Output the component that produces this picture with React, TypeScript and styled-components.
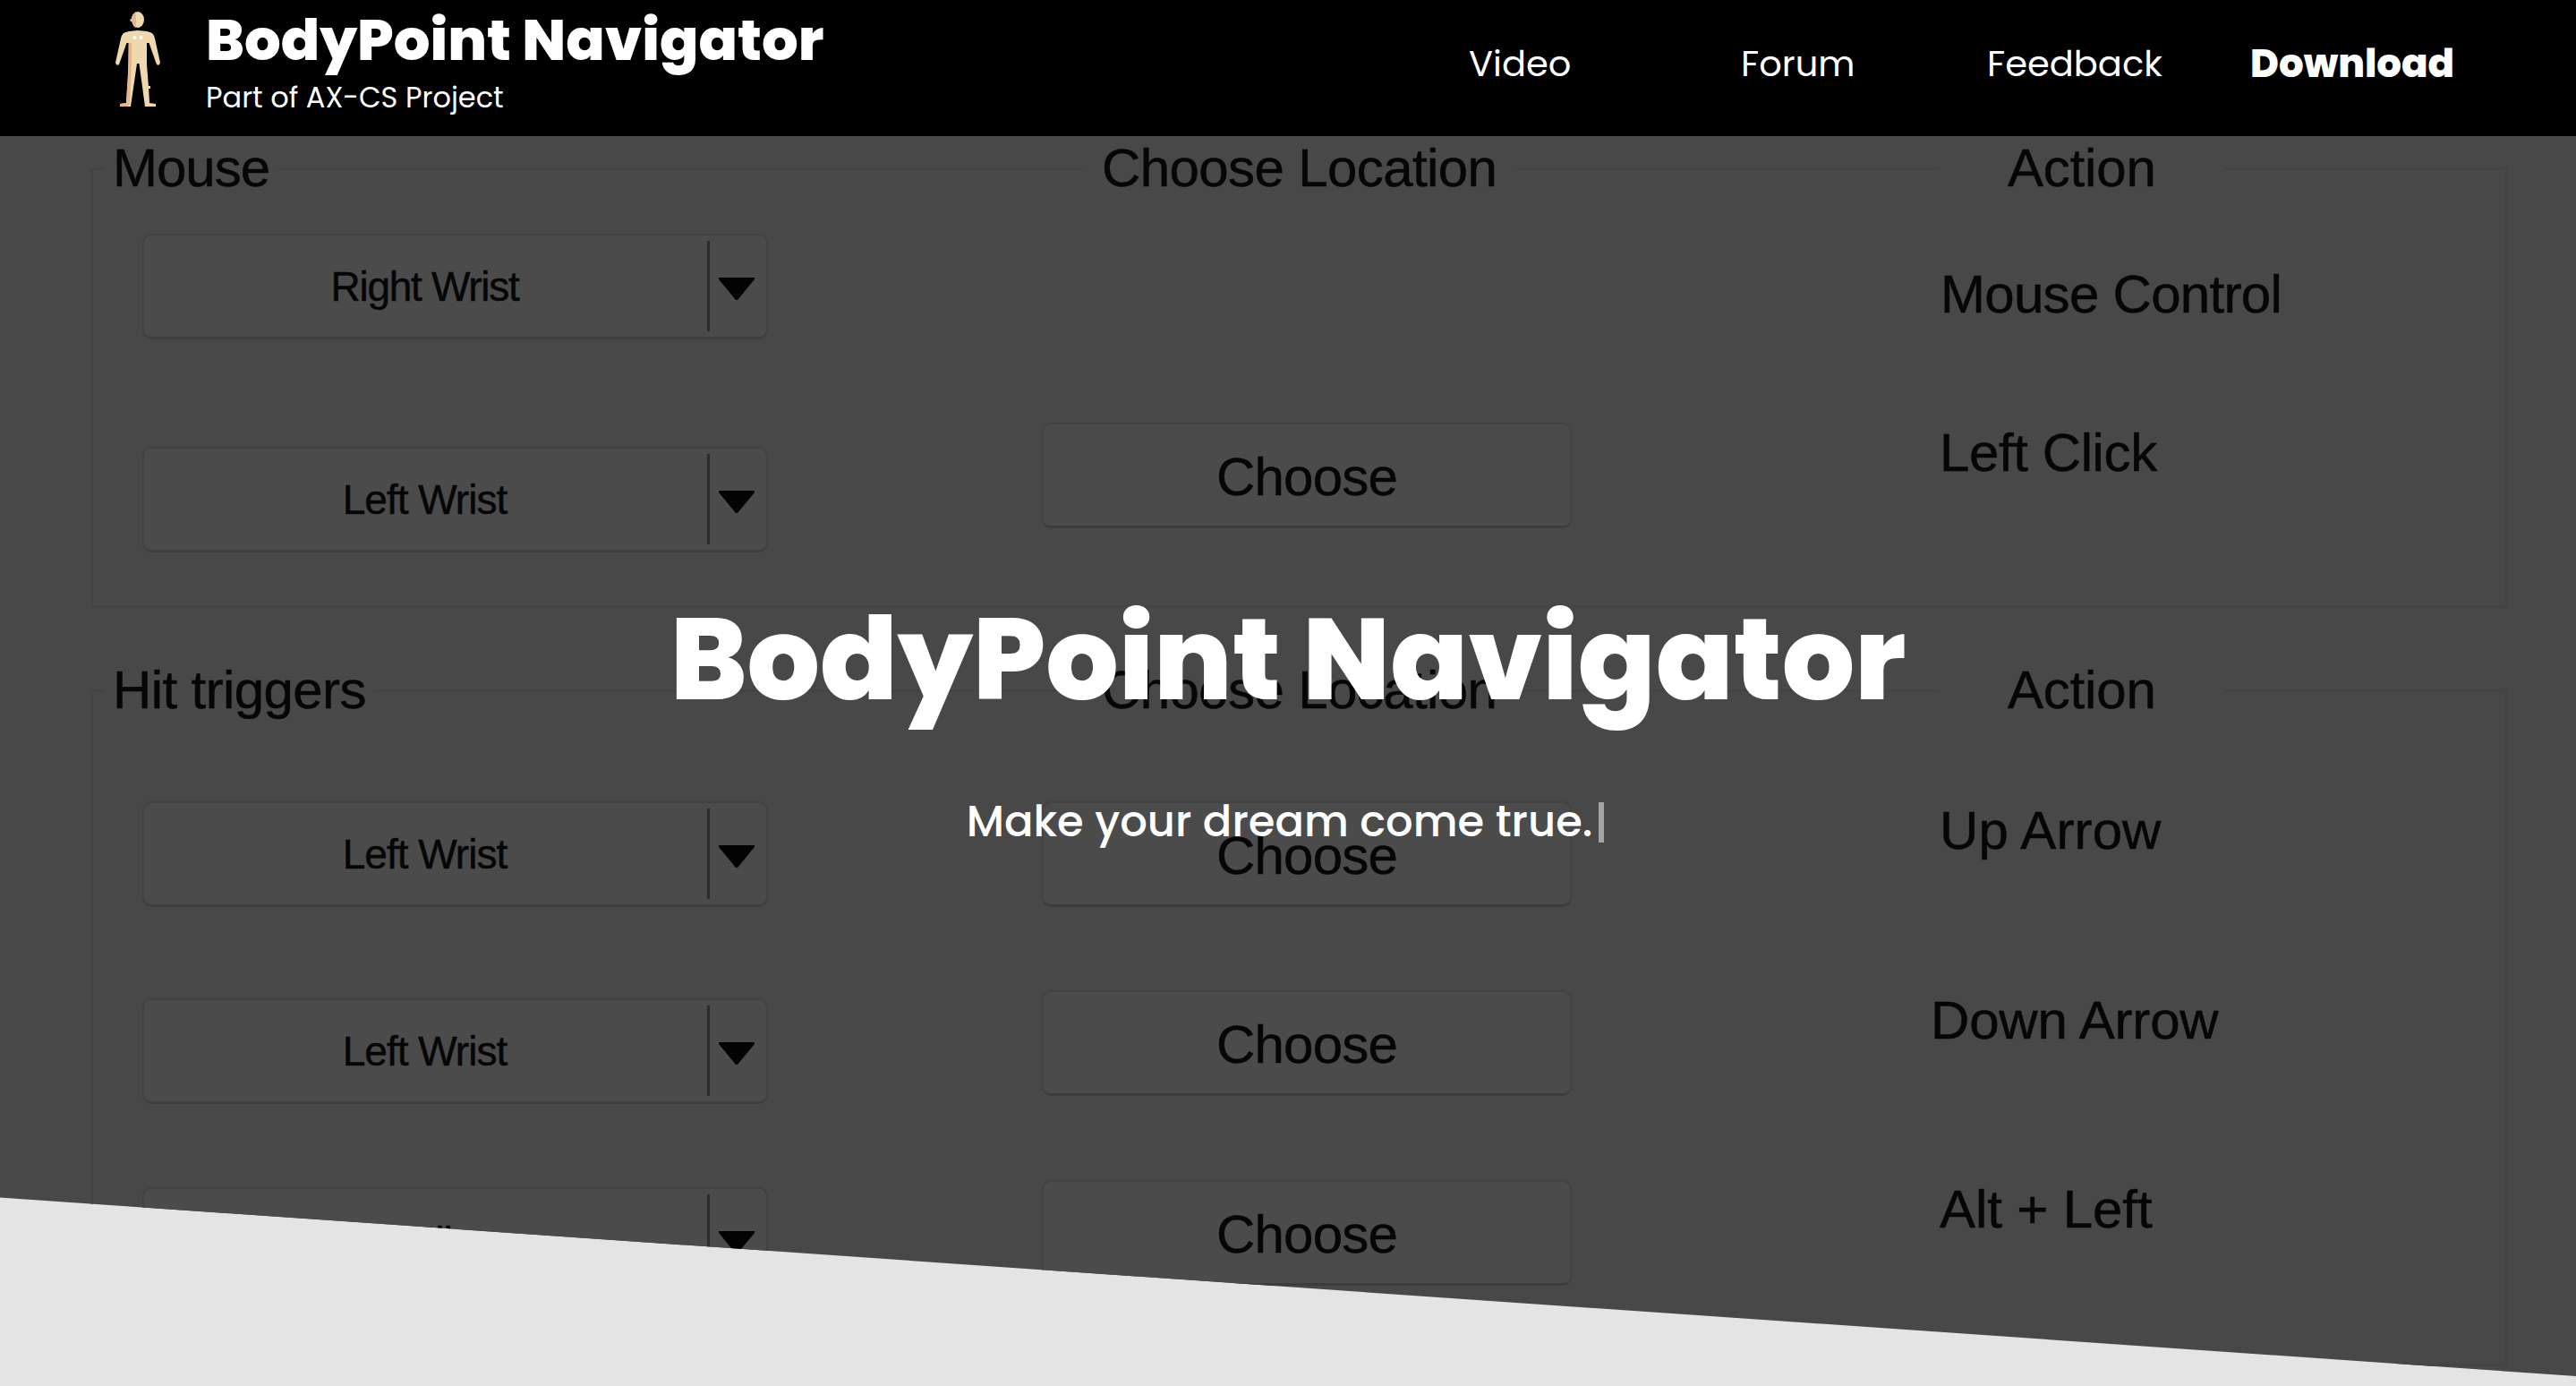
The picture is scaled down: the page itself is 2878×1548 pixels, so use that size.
import React from "react";
import styled, { createGlobalStyle } from "styled-components";

const GlobalStyle = createGlobalStyle`
  body { margin: 0; background: #e4e4e4; overflow: hidden; }
  * { box-sizing: border-box; }
`;

const display = `"Poppins", "Inter", sans-serif`;
const form = `"Liberation Sans", Arial, sans-serif`;

const Page = styled.div`
  width: 2878px;
  height: 1548px;
  overflow: hidden;
  display: flex;
  flex-direction: column;
  font-family: ${display};
  color: #fff;
`;

const Header = styled.header`
  flex: none;
  height: 152px;
  background: #000;
  display: flex;
  padding-left: 128px;
`;

const Figure = styled.svg`
  display: block;
  width: 52px;
  height: 120px;
  flex: none;
`;

const Brand = styled.div`
  margin-left: 50px;
  flex: 1;
  white-space: nowrap;
`;

const BrandName = styled.div`
  font-size: 64px;
  line-height: 89px;
  font-weight: 800;
`;

const BrandNote = styled.div`
  font-size: 32px;
  line-height: 40px;
`;

const Nav = styled.nav`
  display: flex;
  align-items: flex-start;
  padding-top: 41px;
`;

const NavLink = styled.a<{ $width: number }>`
  width: ${(p) => p.$width}px;
  font-size: 40px;
  line-height: 60px;
  white-space: nowrap;
`;

const Download = styled(NavLink)`
  font-size: 43.5px;
  font-weight: 800;
`;

const Hero = styled.main`
  flex: 1;
  display: grid;
  background: #e4e4e4;
  min-height: 0;
`;

const Backdrop = styled.div`
  grid-area: 1 / 1;
  background: #484848;
  clip-path: polygon(0 0, 100% 0, 100% 1385px, 0 1185.5px);
  padding: 35px 76px 0 101px;
  font-family: ${form};
  color: #060606;
  -webkit-text-stroke: 0.5px #060606;
  overflow: hidden;
`;

const Panel = styled.section<{ $height: number }>`
  height: ${(p) => p.$height}px;
  border: 3px solid #444444;
  margin-bottom: 91px;
`;

const Columns = styled.div<{ $height: number }>`
  display: grid;
  grid-template-columns: 1060px 991px 1fr;
  align-items: start;
  justify-items: start;
  height: ${(p) => p.$height}px;
  font-size: 60px;
  line-height: 60px;
  white-space: nowrap;
`;

const LegendRow = styled(Columns)`
  margin-top: -32px;
`;

const Legend = styled.span<{ $shift: number; $pad: number; $track: number }>`
  margin-left: ${(p) => p.$shift}px;
  padding: 0 ${(p) => p.$pad}px;
  background: #484848;
  letter-spacing: ${(p) => p.$track}px;
`;

const Combo = styled.div<{ $drop: number }>`
  margin: ${(p) => p.$drop}px 0 0 55px;
  width: 699px;
  height: 118px;
  border: 2px solid #424242;
  border-bottom: 3px solid #3f3f3f;
  border-radius: 10px;
  background: #4b4b4b;
  display: flex;
  align-items: center;
`;

const ComboLabel = styled.span<{ $track: number; $dip: number }>`
  flex: 1;
  padding: ${(p) => p.$dip}px 2px 0 0;
  text-align: center;
  font-size: 46px;
  line-height: 60px;
  letter-spacing: ${(p) => p.$track}px;
`;

const Divider = styled.i`
  width: 3px;
  height: 101px;
  background: #2b2b2b;
`;

const Arrow = styled.svg`
  width: 40px;
  height: 26px;
  margin: 6px 13px 0 10px;
`;

const Choose = styled.div<{ $drop: number }>`
  margin-top: ${(p) => p.$drop}px;
  width: 592px;
  height: 118px;
  border: 2px solid #424242;
  border-bottom: 3px solid #3d3d3d;
  border-radius: 10px;
  background: #4b4b4b;
  text-align: center;
  line-height: 117px;
  letter-spacing: -0.8px;
`;

const ActionName = styled.span<{ $drop: number; $shift: number; $track: number }>`
  margin: ${(p) => p.$drop}px 0 0 ${(p) => p.$shift}px;
  letter-spacing: ${(p) => p.$track}px;
`;

const Intro = styled.div`
  grid-area: 1 / 1;
  position: relative;
  display: flex;
  flex-direction: column;
  align-items: center;
  padding-top: 505px;
  white-space: nowrap;
`;

const Title = styled.h1`
  margin: 0;
  font-size: 128px;
  line-height: 160px;
  font-weight: 800;
`;

const Tagline = styled.p`
  margin: 69px 6px 0 0;
  display: flex;
  align-items: center;
  font-size: 48px;
  line-height: 64px;
  font-weight: 500;
`;

const Caret = styled.i`
  width: 6px;
  height: 45px;
  margin-left: 7px;
  background: #a5a5a5;
`;

interface Entry {
  part: string;
  partDrop: number;
  partTrack?: number;
  partDip?: number;
  chooseDrop?: number;
  action: string;
  actionDrop: number;
  actionShift: number;
  actionTrack: number;
}

const mouse: Entry[] = [
  { part: "Right Wrist", partDrop: 43, partTrack: -1.3, action: "Mouse Control", actionDrop: 81, actionShift: 13, actionTrack: -0.7 },
  { part: "Left Wrist", partDrop: 41, chooseDrop: 14, action: "Left Click", actionDrop: 18, actionShift: 12, actionTrack: -0.4 },
];

const triggers: Entry[] = [
  { part: "Left Wrist", partDrop: 94, chooseDrop: 94, action: "Up Arrow", actionDrop: 97, actionShift: 12, actionTrack: 0.1 },
  { part: "Left Wrist", partDrop: 102, chooseDrop: 93, action: "Down Arrow", actionDrop: 97, actionShift: 2, actionTrack: -0.2 },
  { part: "Left Elbow", partDrop: 101, partDip: 4, chooseDrop: 93, action: "Alt + Left", actionDrop: 96, actionShift: 12, actionTrack: -0.1 },
];

function Group({ title, titleTrack, height, rowHeight, entries }: {
  title: string; titleTrack: number; height: number; rowHeight: number; entries: Entry[];
}) {
  return (
    <Panel $height={height}>
      <LegendRow $height={60}>
        <Legend $shift={13} $pad={9} $track={titleTrack}>{title}</Legend>
        <Legend $shift={45} $pad={22} $track={-0.6}>Choose Location</Legend>
        <Legend $shift={12} $pad={76} $track={-0.2}>Action</Legend>
      </LegendRow>
      {entries.map((e) => (
        <Columns key={e.action} $height={rowHeight}>
          <Combo $drop={e.partDrop}>
            <ComboLabel $track={e.partTrack ?? -1} $dip={e.partDip ?? 0}>{e.part}</ComboLabel>
            <Divider />
            <Arrow viewBox="0 0 40 26"><path d="M0 0H40V2L21 25H19L0 2Z" fill="#030303" /></Arrow>
          </Combo>
          {e.chooseDrop === undefined ? <span /> : <Choose $drop={e.chooseDrop}>Choose</Choose>}
          <ActionName $drop={e.actionDrop} $shift={e.actionShift} $track={e.actionTrack}>{e.action}</ActionName>
        </Columns>
      ))}
    </Panel>
  );
}

function BodyFigure() {
  return (
    <Figure viewBox="0 0 52 120">
      <path d="M10 37Q14 34.500 26 34Q38 34.500 42 37Q44 39 45 43L51 70Q50 74 47 72L38.500 48H36V72L38 97L39 115L46 116V119H34L27.500 71H25L18 119H6V116L13 115L16 72V48H13.500L5 72Q2 74 1 70L7 43Q8 39 10 37Z" fill="#f0d8ae" />
      <path d="M15.500 48H19V72L17 115L15 119H6V116L13 115L15 80Z" fill="#e6b78d" />
      <ellipse cx="26" cy="22" rx="7" ry="9" fill="#f0d8ae" />
      <path d="M24 13Q19 16 19 21L17.500 21V24H19.500Q21 30 24 31Z" fill="#e6b78d" />
      <path d="M37 96H40V99H37Z" fill="#f0d8ae" />
      <circle cx="22.500" cy="42" r="2" fill="#fff" />
      <circle cx="29.500" cy="42" r="2" fill="#fff" />
    </Figure>
  );
}

export default function App() {
  return (
    <Page>
      <GlobalStyle />
      <Header>
        <BodyFigure />
        <Brand>
          <BrandName>BodyPoint Navigator</BrandName>
          <BrandNote>Part of AX-CS Project</BrandNote>
        </Brand>
        <Nav>
          <NavLink $width={304}>Video</NavLink>
          <NavLink $width={275}>Forum</NavLink>
          <NavLink $width={294}>Feedback</NavLink>
          <Download $width={364}>Download</Download>
        </Nav>
      </Header>
      <Hero>
        <Backdrop>
          <Group title="Mouse" titleTrack={-1} height={492} rowHeight={240} entries={mouse} />
          <Group title="Hit triggers" titleTrack={-0.6} height={756} rowHeight={212} entries={triggers} />
        </Backdrop>
        <Intro>
          <Title>BodyPoint Navigator</Title>
          <Tagline>Make your dream come true.<Caret /></Tagline>
        </Intro>
      </Hero>
    </Page>
  );
}
